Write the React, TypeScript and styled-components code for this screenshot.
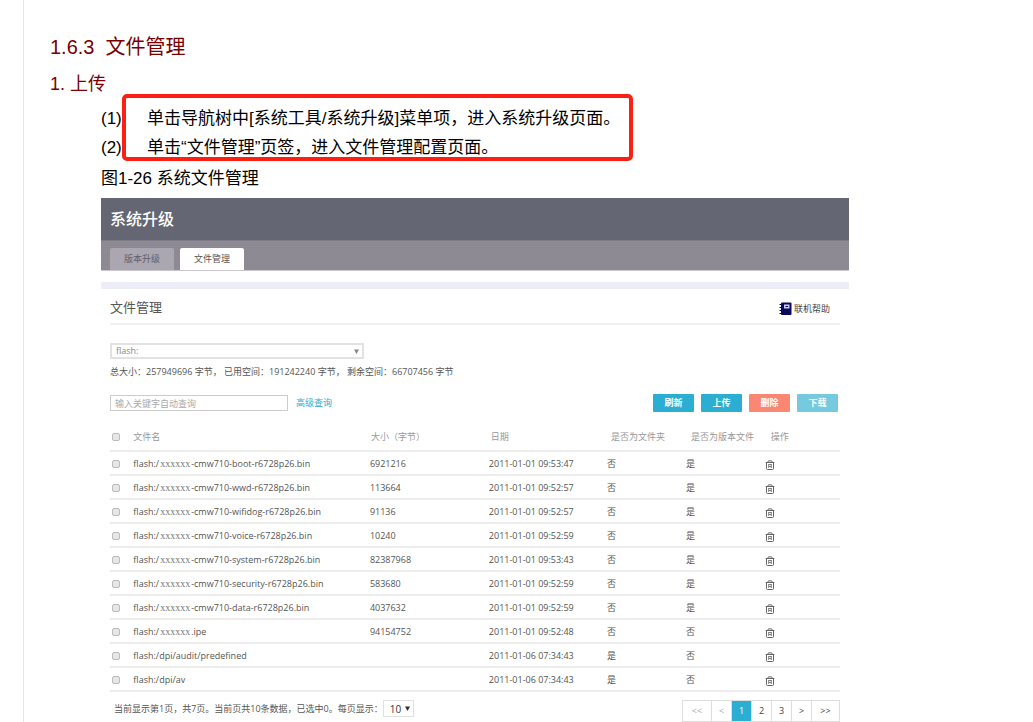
import React from "react";
import styled, { createGlobalStyle, css } from "styled-components";

const GlobalStyle = createGlobalStyle`
  *, *::before, *::after { box-sizing: border-box; }
  body {
    margin: 0;
    background: #fff;
    color: #000;
    font-family: "Liberation Sans", "Noto Sans CJK SC", sans-serif;
  }
  button, input, select { font: inherit; margin: 0; }
`;

const Page = styled.main`
  margin-left: 23px;
  min-height: 100vh;
  border-left: 1px solid #e4e4e4;
  padding: 32px 184px 0 26px;
`;

const SectionTitle = styled.h2`
  margin: 0;
  font-size: 20px;
  line-height: 30px;
  font-weight: 400;
  color: #7a0000;
  white-space: pre;
`;

const StepTitle = styled.h3`
  margin: 8px 0 6px;
  font-size: 18px;
  line-height: 28px;
  font-weight: 400;
  color: #7a0000;
`;

const Body = styled.div`
  margin-left: 51px;
`;

const Steps = styled.ol`
  position: relative;
  margin: 0;
  padding: 0;
  list-style: none;
  font-size: 17px;
  line-height: 29px;
`;

const Step = styled.li`
  display: flex;
  white-space: nowrap;
`;

const StepNumber = styled.span`
  flex: 0 0 46px;
`;

const Highlight = styled.li`
  position: absolute;
  left: 21px;
  top: -10px;
  width: 511px;
  height: 67px;
  border: 4px solid #fb2012;
  border-radius: 5px;
  pointer-events: none;
`;

const Caption = styled.p`
  margin: 2px 0 4px;
  font-size: 17px;
  line-height: 30px;
`;

const Panel = styled.section`
  font-family: "Open Sans", "Noto Sans CJK SC", sans-serif;
  font-size: 9px;
  line-height: 14px;
  color: #555;
`;

const PanelHeader = styled.h4`
  margin: 0;
  padding: 0 9px;
  height: 42px;
  line-height: 42px;
  font-size: 16px;
  font-weight: 500;
  color: #fff;
  background: #646673;
`;

const TabBar = styled.div`
  display: flex;
  align-items: flex-end;
  gap: 6px;
  height: 31px;
  padding: 0 9px;
  background: #8d8a94;
  border-top: 1px solid #7c7b87;
  border-bottom: 1px solid #c9c7cd;
`;

const Tab = styled.button<{ $active?: boolean }>`
  width: 64px;
  height: 22px;
  padding: 0;
  border: 0;
  border-radius: 2px 2px 0 0;
  line-height: 22px;
  color: ${(p) => (p.$active ? "#555" : "#625f6b")};
  background: ${(p) => (p.$active ? "#fff" : "#aaa6b2")};
`;

const Band = styled.div`
  margin-top: 11px;
  height: 7px;
  background: #ecedf6;
`;

const Content = styled.div`
  padding: 0 9px;
`;

const TitleRow = styled.div`
  display: flex;
  align-items: center;
  justify-content: space-between;
  height: 36px;
  padding: 2px 10px 0 0;
  border-bottom: 2px solid #f0f0f0;
`;

const Title = styled.h5`
  margin: 0;
  font-size: 13px;
  line-height: 20px;
  font-weight: 400;
  color: #555;
`;

const HelpLink = styled.a`
  display: flex;
  align-items: center;
  gap: 2px;
  margin-top: 4px;
  color: #444;
  text-decoration: none;
`;

const SelectWrap = styled.div<{ $small?: boolean }>`
  display: flex;
  align-items: center;
  border: ${(p) => (p.$small ? "1px" : "2px")} solid #e2e2e2;
  background: #fff;
  ${(p) =>
    p.$small
      ? css`
          width: 31px;
          height: 17px;
          color: #333;
          font-size: 10px;
        `
      : css`
          width: 254px;
          height: 16px;
          margin-top: 18px;
          color: #888;
        `}
`;

const Select = styled.select<{ $small?: boolean }>`
  appearance: none;
  flex: 1;
  min-width: 0;
  padding: 0 0 0 ${(p) => (p.$small ? "6px" : "4px")};
  border: 0;
  background: transparent;
  color: inherit;
  line-height: 12px;
`;

const Arrow = styled.svg`
  flex: none;
  width: 5px;
  height: 5px;
  margin-right: 3px;
  pointer-events: none;
`;

const Summary = styled.p`
  margin: 6px 0 15px;
  color: #555;
  white-space: pre;
`;

const Toolbar = styled.div`
  display: flex;
  align-items: center;
  height: 18px;
  padding-right: 2px;
`;

const Search = styled.input`
  width: 178px;
  height: 16px;
  padding: 0 4px;
  border: 1px solid #ccc;
  color: #555;
  &::placeholder { color: #aaa; opacity: 1; }
`;

const AdvancedLink = styled.a`
  margin-left: 8px;
  color: #2baed1;
  text-decoration: none;
`;

const Actions = styled.div`
  display: flex;
  gap: 7px;
  margin-left: auto;
`;

const ActionButton = styled.button<{ $color: string }>`
  width: 41px;
  height: 18px;
  padding: 0;
  border: 0;
  border-radius: 1px;
  line-height: 18px;
  font-weight: 700;
  color: #fff;
  background: ${(p) => p.$color};
`;

const Table = styled.table`
  width: 100%;
  margin-top: 12px;
  table-layout: fixed;
  border-collapse: separate;
  border-spacing: 0;
`;

const Head = styled.th<{ $inset?: number }>`
  height: 28px;
  padding: 0 0 0 ${(p) => p.$inset ?? 0}px;
  border-bottom: 2px solid #ececec;
  text-align: left;
  font-weight: 400;
  color: #999;
  white-space: nowrap;
`;

const Cell = styled.td`
  height: 24px;
  padding: 2px 0 0;
  border-bottom: 2px solid #ececec;
  white-space: nowrap;
`;

const Check = styled.input`
  appearance: none;
  display: block;
  width: 8px;
  height: 8px;
  margin: 0 0 0 2px;
  border: 1px solid #bcbcbc;
  border-radius: 2px;
  background: #e6e6e6;
`;

const Masked = styled.span`
  display: inline-block;
  width: 32px;
  text-align: center;
  font-family: "Liberation Serif", serif;
  font-size: 10px;
  line-height: 12px;
  color: #777;
`;

const IconButton = styled.button`
  display: block;
  padding: 0;
  border: 0;
  background: none;
  color: #666;
  margin-top: 1px;
  svg { display: block; }
`;

const Footer = styled.div`
  display: flex;
  align-items: flex-start;
  justify-content: space-between;
  padding: 8px 0 0 4px;
`;

const Status = styled.label`
  display: flex;
  align-items: center;
  white-space: nowrap;
`;

const Pager = styled.nav`
  display: flex;
  border: 1px solid #ddd;
`;

const PageButton = styled.button<{ $wide?: boolean; $active?: boolean; $muted?: boolean }>`
  width: ${(p) => (p.$wide ? 28 : 20)}px;
  height: 20px;
  padding: 0;
  border: 0;
  line-height: 20px;
  color: ${(p) => (p.$active ? "#fff" : p.$muted ? "#aaa" : "#444")};
  background: ${(p) => (p.$active ? "#2baed1" : "#fff")};
  & + & { border-left: 1px solid ${(p) => (p.$active ? "#2baed1" : "#ddd")}; }
`;

const ArrowIcon = () => (
  <Arrow viewBox="0 0 5 5" aria-hidden="true">
    <path d="M0 0.5h5L2.5 5z" fill="currentColor" />
  </Arrow>
);

const TrashIcon = () => (
  <svg width="10" height="10" viewBox="0 0 10 10" fill="none" stroke="currentColor" aria-hidden="true">
    <path d="M0.6 2.5h8.8M2.8 2.2Q3 0.8 4 0.8h2q1 0 1.2 1.4M1.5 2.8v5.7q0 1 1 1h5q1 0 1-1V2.8" />
    <path d="M3.7 4v4M6.3 4v4M3.7 4.5h2.6M3.7 6.5h2.6" strokeWidth="0.8" />
  </svg>
);

const BookIcon = () => (
  <svg width="13" height="14" viewBox="0 0 13 14" aria-hidden="true">
    <rect x="2" y="0.5" width="10.5" height="12.5" rx="1" fill="#0a0a5c" />
    <path d="M0.5 2.5h2M0.5 5.5h2M0.5 8.5h2M0.5 11.5h2" stroke="#0a0a5c" />
    <rect x="5" y="2.5" width="5.5" height="4" fill="#c9cbe8" />
    <path d="M6.5 4.5h2.5" stroke="#0a0a5c" />
  </svg>
);

type FileRow = {
  prefix: string;
  suffix?: string;
  size?: string;
  date: string;
  folder: string;
  version: string;
};

const files: FileRow[] = [
  { prefix: "flash:/", suffix: "-cmw710-boot-r6728p26.bin", size: "6921216", date: "2011-01-01 09:53:47", folder: "否", version: "是" },
  { prefix: "flash:/", suffix: "-cmw710-wwd-r6728p26.bin", size: "113664", date: "2011-01-01 09:52:57", folder: "否", version: "是" },
  { prefix: "flash:/", suffix: "-cmw710-wifidog-r6728p26.bin", size: "91136", date: "2011-01-01 09:52:57", folder: "否", version: "是" },
  { prefix: "flash:/", suffix: "-cmw710-voice-r6728p26.bin", size: "10240", date: "2011-01-01 09:52:59", folder: "否", version: "是" },
  { prefix: "flash:/", suffix: "-cmw710-system-r6728p26.bin", size: "82387968", date: "2011-01-01 09:53:43", folder: "否", version: "是" },
  { prefix: "flash:/", suffix: "-cmw710-security-r6728p26.bin", size: "583680", date: "2011-01-01 09:52:59", folder: "否", version: "是" },
  { prefix: "flash:/", suffix: "-cmw710-data-r6728p26.bin", size: "4037632", date: "2011-01-01 09:52:59", folder: "否", version: "是" },
  { prefix: "flash:/", suffix: ".ipe", size: "94154752", date: "2011-01-01 09:52:48", folder: "否", version: "否" },
  { prefix: "flash:/dpi/audit/predefined", date: "2011-01-06 07:34:43", folder: "是", version: "否" },
  { prefix: "flash:/dpi/av", date: "2011-01-06 07:34:43", folder: "是", version: "否" },
];

const columns = ["3.2%", "32.4%", "16.3%", "16.2%", "10.8%", "10.8%", "10.3%"];

export default function App() {
  return (
    <>
      <GlobalStyle />
      <Page>
        <SectionTitle>{"1.6.3  文件管理"}</SectionTitle>
        <StepTitle>1. 上传</StepTitle>
        <Body>
          <Steps>
            <Step>
              <StepNumber>(1)</StepNumber>
              <span>单击导航树中[系统工具/系统升级]菜单项，进入系统升级页面。</span>
            </Step>
            <Step>
              <StepNumber>(2)</StepNumber>
              <span>单击“文件管理”页签，进入文件管理配置页面。</span>
            </Step>
            <Highlight aria-hidden="true" />
          </Steps>
          <Caption>图1-26 系统文件管理</Caption>

          <Panel>
            <PanelHeader>系统升级</PanelHeader>
            <TabBar>
              <Tab type="button">版本升级</Tab>
              <Tab type="button" $active>文件管理</Tab>
            </TabBar>
            <Band />
            <Content>
              <TitleRow>
                <Title>文件管理</Title>
                <HelpLink href="#help">
                  <BookIcon />
                  联机帮助
                </HelpLink>
              </TitleRow>

              <SelectWrap>
                <Select aria-label="存储介质" defaultValue="flash">
                  <option value="flash">flash:</option>
                </Select>
                <ArrowIcon />
              </SelectWrap>
              <Summary>{"总大小：257949696 字节， 已用空间：191242240 字节， 剩余空间：66707456 字节"}</Summary>

              <Toolbar>
                <Search type="text" placeholder="输入关键字自动查询" aria-label="输入关键字自动查询" />
                <AdvancedLink href="#advanced">高级查询</AdvancedLink>
                <Actions>
                  <ActionButton type="button" $color="#2baed1">刷新</ActionButton>
                  <ActionButton type="button" $color="#2baed1">上传</ActionButton>
                  <ActionButton type="button" $color="#fa8771">删除</ActionButton>
                  <ActionButton type="button" $color="#76cae0">下载</ActionButton>
                </Actions>
              </Toolbar>

              <Table>
                <colgroup>
                  {columns.map((width, i) => (
                    <col key={i} style={{ width }} />
                  ))}
                </colgroup>
                <thead>
                  <tr>
                    <Head><Check type="checkbox" aria-label="全选" /></Head>
                    <Head>文件名</Head>
                    <Head $inset={1}>大小（字节）</Head>
                    <Head $inset={2}>日期</Head>
                    <Head $inset={4}>是否为文件夹</Head>
                    <Head $inset={5}>是否为版本文件</Head>
                    <Head $inset={6}>操作</Head>
                  </tr>
                </thead>
                <tbody>
                  {files.map((file, i) => (
                    <tr key={i}>
                      <Cell><Check type="checkbox" aria-label="选择文件" /></Cell>
                      <Cell>
                        {file.prefix}
                        {file.suffix && <Masked>xxxxxx</Masked>}
                        {file.suffix}
                      </Cell>
                      <Cell>{file.size}</Cell>
                      <Cell>{file.date}</Cell>
                      <Cell>{file.folder}</Cell>
                      <Cell>{file.version}</Cell>
                      <Cell>
                        <IconButton type="button" aria-label="删除文件"><TrashIcon /></IconButton>
                      </Cell>
                    </tr>
                  ))}
                </tbody>
              </Table>

              <Footer>
                <Status>
                  当前显示第1页，共7页。当前页共10条数据，已选中0。每页显示：
                  <SelectWrap $small>
                    <Select $small defaultValue="10">
                      <option value="10">10</option>
                    </Select>
                    <ArrowIcon />
                  </SelectWrap>
                </Status>
                <Pager aria-label="分页">
                  <PageButton type="button" $wide $muted>&lt;&lt;</PageButton>
                  <PageButton type="button" $muted>&lt;</PageButton>
                  <PageButton type="button" $active>1</PageButton>
                  <PageButton type="button">2</PageButton>
                  <PageButton type="button">3</PageButton>
                  <PageButton type="button">&gt;</PageButton>
                  <PageButton type="button" $wide>&gt;&gt;</PageButton>
                </Pager>
              </Footer>
            </Content>
          </Panel>
        </Body>
      </Page>
    </>
  );
}
